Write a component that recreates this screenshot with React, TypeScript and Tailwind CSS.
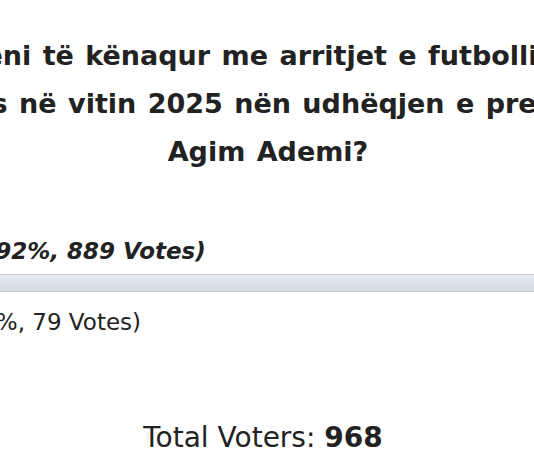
const options = [
  { label: 'Po', percent: 92, votes: 889, leading: true },
  { label: 'Jo', percent: 8, votes: 79, leading: false },
];

export default function App() {
  return (
    <div
      className="w-[534px] h-[462px] overflow-hidden bg-white text-[#222222]"
      style={{ fontFamily: '"DejaVu Sans", Verdana, sans-serif' }}
    >
      <div className="w-[1000px] ml-[-232px] pt-[32px]">
        <h2 className="text-center font-bold text-[27px] leading-[48px] [word-spacing:2px]">
          <span className="block">A jeni të kënaqur me arritjet e futbollit të</span>
          <span className="block">Kosovës në vitin 2025 nën udhëqjen e presidentit</span>
          <span className="block">Agim Ademi?</span>
        </h2>
      </div>

      <div className="w-[700px] ml-[-80px] mt-[61px]">
        {options.map((o, i) => (
          <div key={o.label} className={i > 0 ? 'mt-[16px]' : ''}>
            <div
              className={
                'pl-[24px] text-[23px] leading-[28px] whitespace-nowrap ' +
                (o.leading ? 'font-bold italic' : '')
              }
            >
              {o.label} ({o.percent}%, {o.votes} Votes)
            </div>
            <div
              className="mt-[9px] h-[18px] border-y border-[#c9c9ce] bg-gradient-to-b from-[#e3ebf3] to-[#d2dce6]"
              style={{ width: `${o.percent}%` }}
            />
          </div>
        ))}
      </div>

      <div className="w-[1000px] ml-[-237px] mt-[57px] text-center text-[28px] leading-[36px]">
        Total Voters: <span className="font-bold">968</span>
      </div>
    </div>
  );
}
